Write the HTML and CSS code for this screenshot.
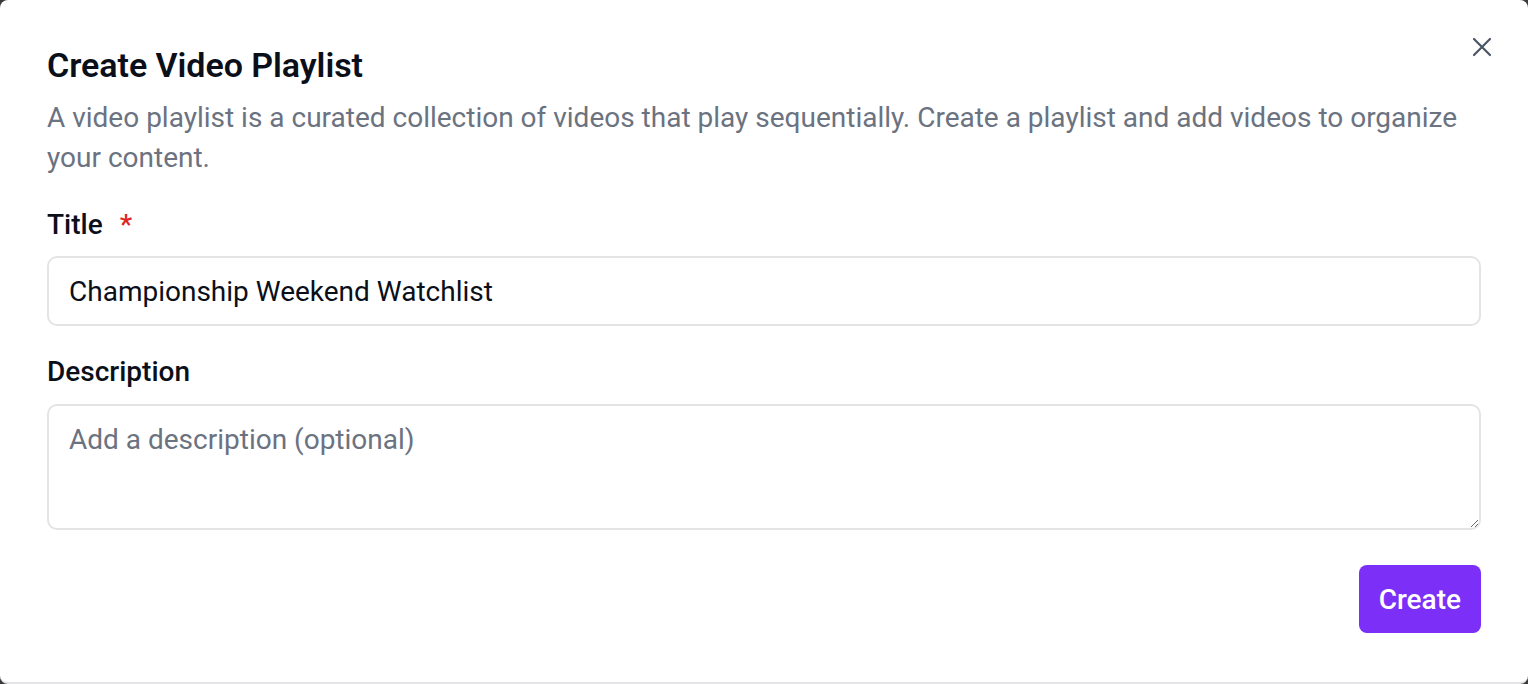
FILE: index.html
```html
<!DOCTYPE html>
<html lang="en">
<head>
<meta charset="utf-8">
<title>Create Video Playlist</title>
<link rel="stylesheet" href="styles.css">
</head>
<body>
<div class="modal">
  <button class="close" aria-label="Close">
    <svg width="24" height="24" viewBox="0 0 24 24" fill="none" stroke="currentColor" stroke-width="2.2" stroke-linecap="round"><path d="M4 4L20 20M20 4L4 20"/></svg>
  </button>
  <h2 class="title">Create Video Playlist</h2>
  <p class="desc">A video playlist is a curated collection of videos that play sequentially. Create a playlist and add videos to organize your content.</p>
  <div class="field field-title">
    <label class="label" for="t">Title <span class="req">*</span></label>
    <input id="t" class="input" type="text" value="Championship Weekend Watchlist">
  </div>
  <div class="field field-desc">
    <label class="label" for="d">Description</label>
    <textarea id="d" class="textarea" placeholder="Add a description (optional)"></textarea>
  </div>
  <div class="footer">
    <button class="btn">Create</button>
  </div>
</div>
</body>
</html>
```
FILE: styles.css
```css
html { background: #3a3a3a; }
body {
  margin: 0;
  font-family: Roboto, "Liberation Sans", sans-serif;
}
.modal {
  position: relative;
  box-sizing: border-box;
  height: 684px;
  background: #fff;
  border-radius: 8px;
  border-bottom: 2px solid #e4e4e7;
  padding: 45px 47px 0 47px;
}
.close {
  position: absolute;
  top: 35px;
  right: 34px;
  width: 24px;
  height: 24px;
  padding: 0;
  border: 0;
  background: none;
  color: #4b5563;
  cursor: pointer;
}
.close svg { display: block; }
.title {
  margin: 0;
  font-size: 34px;
  line-height: 40px;
  font-weight: 600;
  color: #0b0f19;
  letter-spacing: -0.05px;
}
.desc {
  margin: 13px 0 0;
  font-size: 28px;
  line-height: 40px;
  color: #6b7280;
}
.field { display: flex; flex-direction: column; }
.field-title { margin-top: 29px; }
.field-desc { margin-top: 28px; }
.label {
  font-size: 28px;
  line-height: 36px;
  font-weight: 500;
  color: #0b0f19;
}
.req {
  color: #e02424;
  margin-left: 10px;
}
.input, .textarea {
  box-sizing: border-box;
  width: 100%;
  border: 2px solid #e4e4e7;
  border-radius: 10px;
  font-family: Roboto, "Liberation Sans", sans-serif;
  font-size: 28px;
  color: #0b0f19;
  background: #fff;
  outline: none;
  padding: 0 20px;
}
.input {
  margin-top: 13px;
  height: 70px;
}
.textarea {
  margin-top: 14px;
  height: 126px;
  padding-top: 16px;
  line-height: 36px;
  resize: vertical;
  display: block;
}
.textarea::placeholder { color: #6b7280; opacity: 1; }
.footer {
  display: flex;
  justify-content: flex-end;
  margin-top: 35px;
}
.btn {
  height: 68px;
  padding: 0 20px;
  border: 0;
  border-radius: 8px;
  background: #7b2ff7;
  color: #fff;
  font-family: Roboto, "Liberation Sans", sans-serif;
  font-size: 28px;
  font-weight: 500;
  cursor: pointer;
}
```
